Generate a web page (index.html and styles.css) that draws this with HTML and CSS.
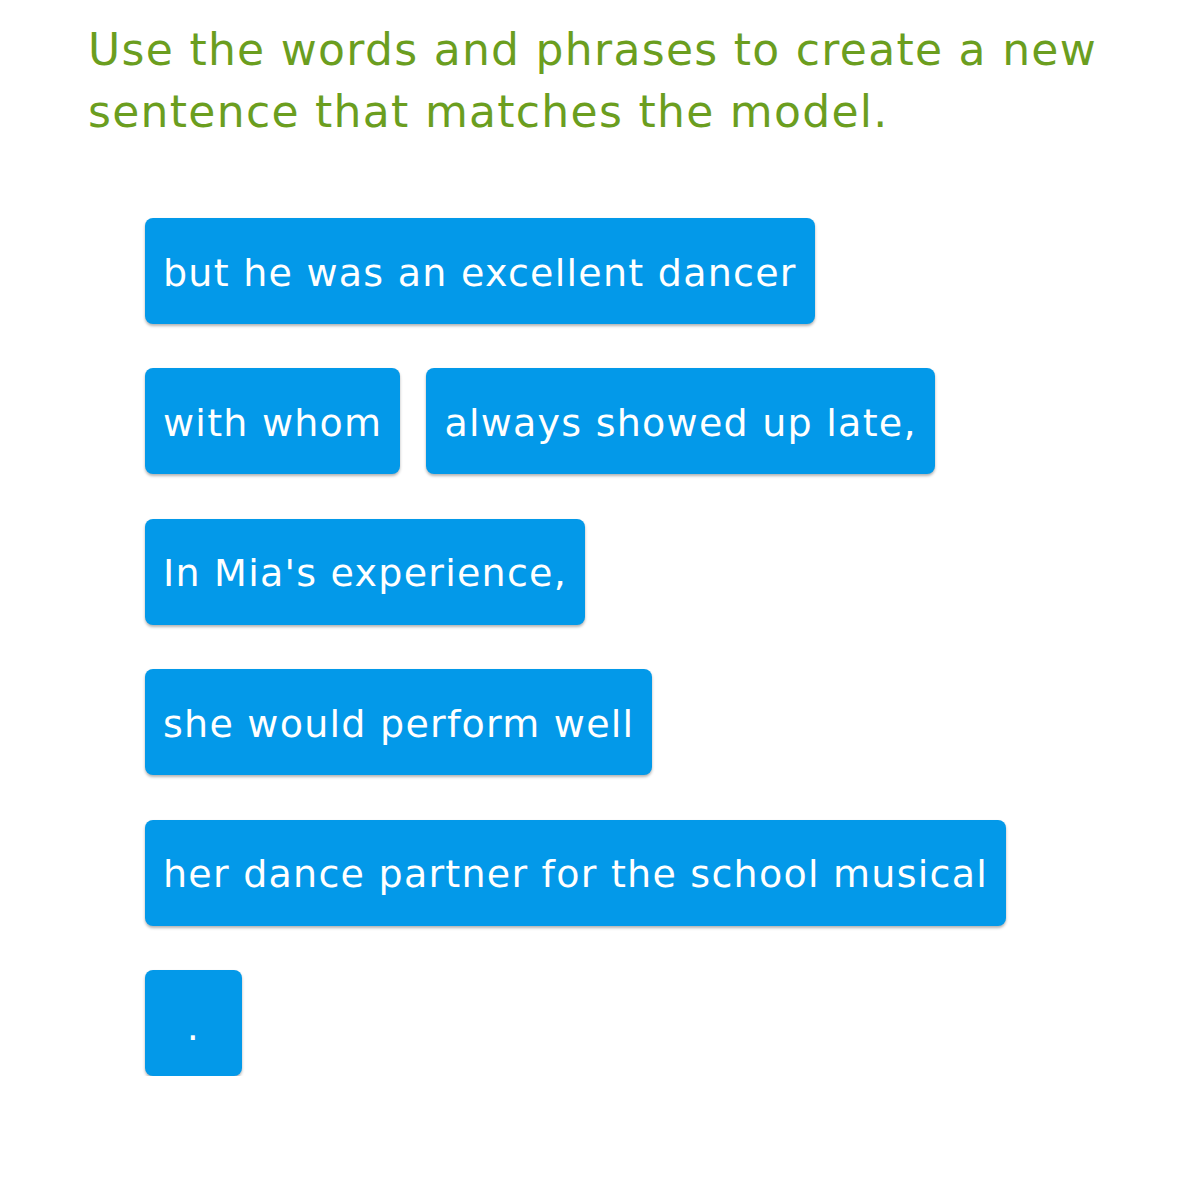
FILE: index.html
```html
<!DOCTYPE html>
<html lang="en">
<head>
    <meta charset="UTF-8">
    <title>Build a sentence</title>
    <link rel="stylesheet" href="styles.css">
</head>
<body>
    <h1 class="prompt">Use the words and phrases to create a new sentence that matches the model.</h1>

    <div class="tiles">
        <div class="tile-row">
            <div class="tile">but he was an excellent dancer</div>
        </div>
        <div class="tile-row">
            <div class="tile">with whom</div>
            <div class="tile">always showed up late,</div>
        </div>
        <div class="tile-row">
            <div class="tile">In Mia's experience,</div>
        </div>
        <div class="tile-row">
            <div class="tile">she would perform well</div>
        </div>
        <div class="tile-row">
            <div class="tile">her dance partner for the school musical</div>
        </div>
        <div class="tile-row">
            <div class="tile tile-dot">.</div>
        </div>
    </div>
</body>
</html>
```

FILE: styles.css
```css
body {
    margin: 0;
    padding: 19px 0 0 88px;
    font-family: "DejaVu Sans", Verdana, sans-serif;
    background: #fff;
}
.prompt {
    margin: 0;
    width: 1080px;
    font-size: 44px;
    font-weight: normal;
    line-height: 62px;
    letter-spacing: 1.3px;
    color: #6b9e1f;
}
.tiles {
    display: flex;
    flex-direction: column;
    gap: 44.4px;
    margin: 75px 0 0 57px;
}
.tile-row {
    display: flex;
    gap: 26px;
}
.tile {
    height: 106px;
    box-sizing: border-box;
    padding: 3px 18px 0;
    display: flex;
    align-items: center;
    background: #0399e9;
    color: #fff;
    font-size: 38px;
    letter-spacing: 1.25px;
    border-radius: 8px;
    box-shadow: 0 2px 3px rgba(0, 0, 0, 0.3);
    white-space: nowrap;
}
.tile-dot {
    width: 97px;
    justify-content: center;
    padding-top: 8px;
}
```
